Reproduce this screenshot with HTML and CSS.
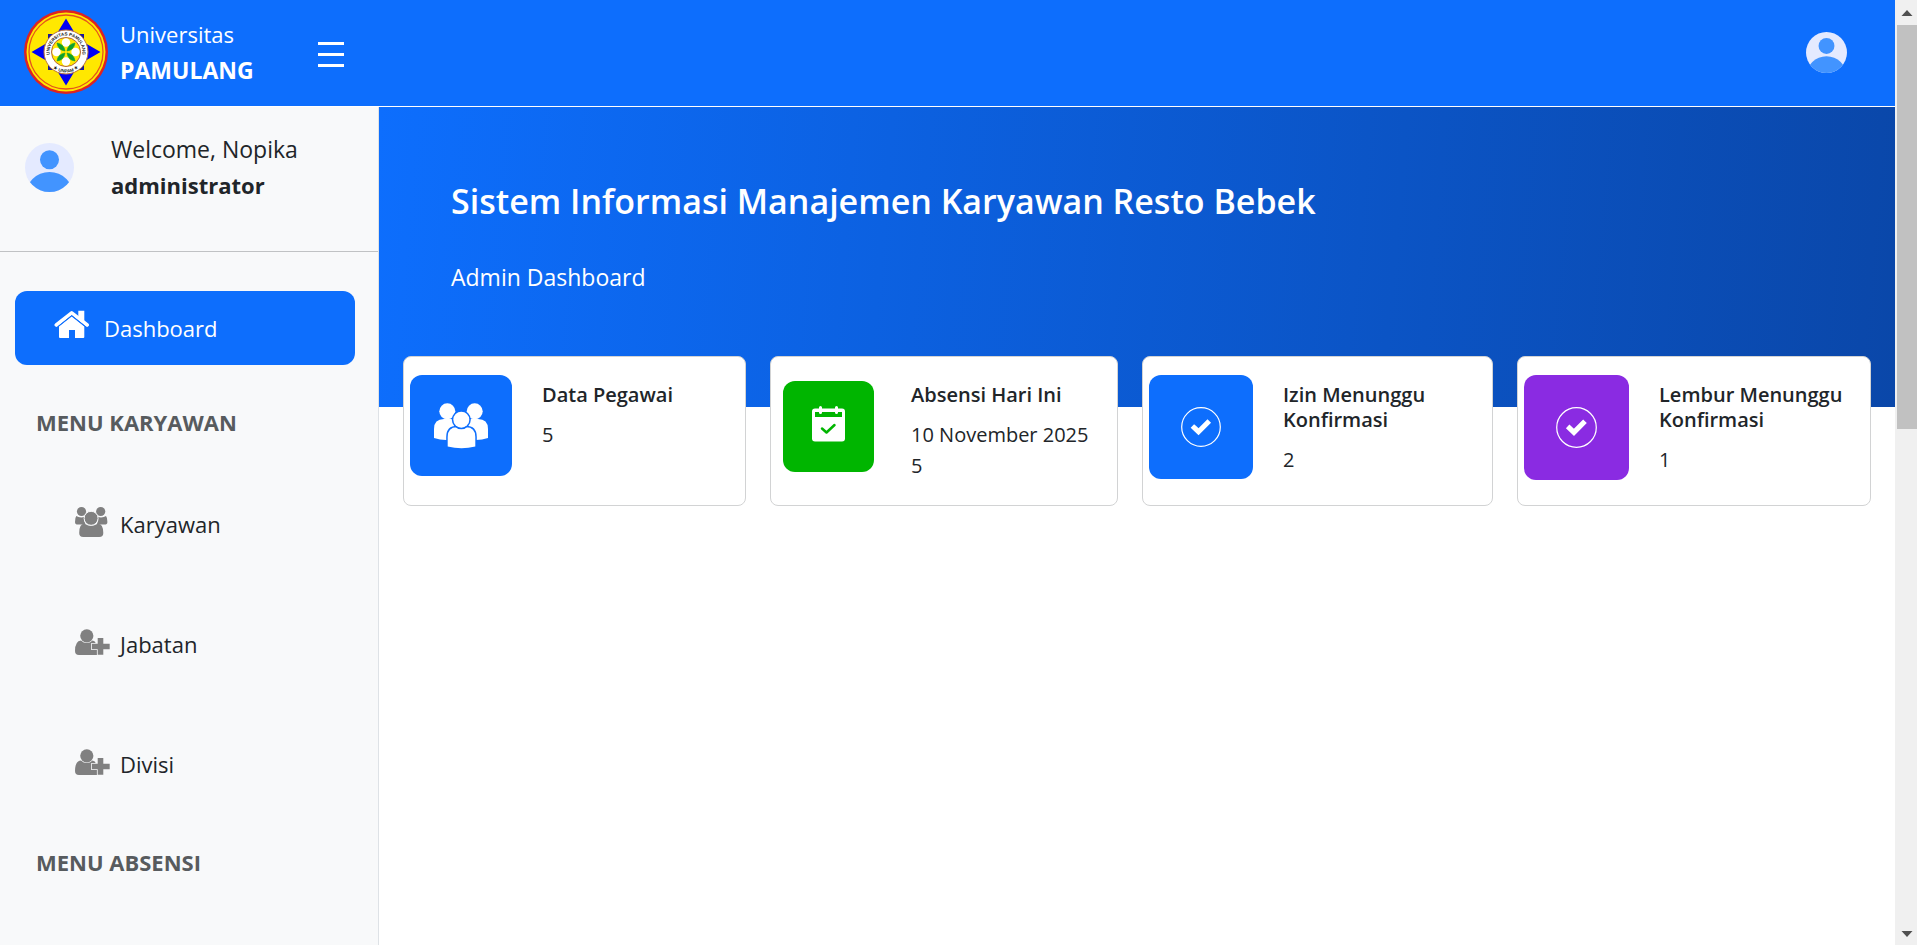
FILE: index.html
```html
<!DOCTYPE html>
<html lang="id">
<head>
<meta charset="utf-8">
<title>Admin Dashboard</title>
<link rel="stylesheet" href="styles.css">
</head>
<body>
<div class="page">
  <header class="navbar">
    <a class="brand" href="#">
      <svg class="brand-logo" viewBox="0 0 84 84" aria-hidden="true">
        <defs>
          <path id="ring-top" d="M28 50.500A16.400 16.400 0 1 1 56 50.500"/>
          <path id="ring-bottom" d="M27 56A20.500 20.500 0 0 0 57 56"/>
        </defs>
        <circle cx="42" cy="42" r="42" fill="#df2320"/>
        <circle cx="42" cy="42" r="39.500" fill="#ffe800"/>
        <circle cx="42" cy="42" r="37" fill="none" stroke="#e5531c" stroke-width="1.300"/>
        <path d="M24 24h36v36H24z" fill="#1a1a9c"/>
        <path d="M42 8.500L55 30H29zM42 75.500L29 54h26zM7.500 42L29 29.500v25zM76.500 42L55 54.500v-25z" fill="#0000f5"/>
        <circle cx="42" cy="42" r="22" fill="#fff" stroke="#c07a35" stroke-width="1"/>
        <circle cx="42" cy="42" r="14.500" fill="#ffe800" stroke="#b5653a" stroke-width="1"/>
        <g fill="#fff"><circle cx="42" cy="32.500" r="4.200"/><circle cx="42" cy="51.500" r="4.200"/><circle cx="32.500" cy="42" r="4.200"/><circle cx="51.500" cy="42" r="4.200"/></g>
        <path d="M41 41Q34 40 33 33Q40 34 41 41M43 41Q44 34 51 33Q50 40 43 41M41 43Q40 50 33 51Q34 44 41 43M43 43Q50 44 51 51Q44 50 43 43" fill="#0da030" stroke="#0da030" stroke-width=".6"/>
        <text class="ring-text"><textPath href="#ring-top" startOffset="50%" text-anchor="middle">UNIVERSITAS PAMULANG</textPath></text>
        <text class="ring-text"><textPath href="#ring-bottom" startOffset="50%" text-anchor="middle">★ UNPAM ★</textPath></text>
      </svg>
      <span class="brand-name">Universitas<strong>PAMULANG</strong></span>
    </a>
    <button class="menu-toggle" type="button" aria-label="Menu"><span></span><span></span><span></span></button>
    <button class="account" type="button" aria-label="Akun">
      <svg viewBox="0 0 50 50"><clipPath id="clip-a"><circle cx="25" cy="25" r="25"/></clipPath><circle cx="25" cy="25" r="25" fill="#e4eaff"/><g clip-path="url(#clip-a)" fill="#4294ff"><circle cx="25" cy="17" r="9.700"/><circle cx="25" cy="54" r="24.500"/></g></svg>
    </button>
  </header>
  <div class="layout">
    <aside class="sidebar">
      <div class="user">
        <svg class="user-avatar" viewBox="0 0 50 50" aria-hidden="true"><clipPath id="clip-b"><circle cx="25" cy="25" r="25"/></clipPath><circle cx="25" cy="25" r="25" fill="#e4eaff"/><g clip-path="url(#clip-b)" fill="#4294ff"><circle cx="25" cy="17" r="9.700"/><circle cx="25" cy="54" r="24.500"/></g></svg>
        <p class="user-text">Welcome, Nopika<strong>administrator</strong></p>
      </div>
      <nav>
        <a class="link-active" href="#">
          <svg class="nav-icon" viewBox="0 0 36 36" aria-hidden="true" fill="#fff"><path d="M24.300.700h6v13l-6-5z"/><path d="M2.300 15L17.700 2.800L33.200 15" fill="none" stroke="#fff" stroke-width="3.600" stroke-linecap="round" stroke-linejoin="round"/><path d="M5 16.500L17.700 6.400L30.300 16.500V27a1 1 0 0 1-1 1H21v-8h-6v8H6a1 1 0 0 1-1-1z"/><path d="M3.500 17L17.700 5.600L32 17" fill="none" stroke="#0d6efd" stroke-width="1"/></svg>
          Dashboard
        </a>
        <h2 class="menu-title">MENU KARYAWAN</h2>
        <ul class="menu">
          <li><a href="#">
            <svg class="nav-icon" viewBox="0 0 36 36" aria-hidden="true" fill="#808080"><circle cx="6.500" cy="5.500" r="4.600"/><circle cx="25.700" cy="5.500" r="4.600"/><path d="M1.300 10q2 1.400 5 1.400q1.700 0 3-.6q-.8 4.500 1.300 7.800H3Q0 18.600 0 16q0-4.500 1.300-6zM31 10q-2 1.400-5 1.400q-1.700 0-3-.6q.8 4.500-1.300 7.800h7.700q3 0 3-2.600Q32.400 11.500 31 10z"/><path d="M9.500 17.800q3 2 6.500 2t6.700-2Q28.300 17.800 28.300 27q0 4-4 4H8.200q-4 0-4-4Q4.200 17.800 9.500 17.800z"/><circle cx="16.100" cy="12.300" r="7" stroke="#f8f9fa" stroke-width="1"/></svg>
            Karyawan</a></li>
          <li><a href="#">
            <svg class="nav-icon" viewBox="0 0 36 36" aria-hidden="true" fill="#808080"><path d="M6 14.500q2.500 2.500 5.700 2.500t5.800-2.500Q22 15 22 24v5H4q-4 0-4-4Q0 15 6 14.500z"/><circle cx="11.800" cy="9.800" r="6.600"/><path d="M22.700 12h5.600v5.700h6.400v5.600h-6.400v5.400h-5.600v-5.400H17v-5.600h5.700z" stroke="#f8f9fa" stroke-width="1.600" paint-order="stroke"/></svg>
            Jabatan</a></li>
          <li><a href="#">
            <svg class="nav-icon" viewBox="0 0 36 36" aria-hidden="true" fill="#808080"><path d="M6 14.500q2.500 2.500 5.700 2.500t5.800-2.500Q22 15 22 24v5H4q-4 0-4-4Q0 15 6 14.500z"/><circle cx="11.800" cy="9.800" r="6.600"/><path d="M22.700 12h5.600v5.700h6.400v5.600h-6.400v5.400h-5.600v-5.400H17v-5.600h5.700z" stroke="#f8f9fa" stroke-width="1.600" paint-order="stroke"/></svg>
            Divisi</a></li>
        </ul>
        <h2 class="menu-title">MENU ABSENSI</h2>
      </nav>
    </aside>
    <main class="content">
      <section class="hero">
        <h1>Sistem Informasi Manajemen Karyawan Resto Bebek</h1>
        <p>Admin Dashboard</p>
      </section>
      <section class="cards">
        <article class="card">
          <div class="tile tile-blue tile-users">
            <svg width="54" height="46" viewBox="0 0 54 46" aria-hidden="true" fill="#fff"><circle cx="13.300" cy="8.300" r="8"/><circle cx="40.700" cy="8.300" r="8"/><path d="M0 35V26Q0 16 10 16h7q8 0 8 10v11H12Q6 37 0 35zM54 35V26Q54 16 44 16h-7q-8 0-8 10v11h13Q48 37 54 35z"/><path d="M13.700 43.500V34Q13.700 24.300 23 24.300h9Q41.300 24.300 41.300 34v9.500Q27.500 47 13.700 43.500z" stroke="#0d6efd" stroke-width="3" paint-order="stroke"/><circle cx="27.300" cy="16.700" r="8" stroke="#0d6efd" stroke-width="3" paint-order="stroke"/></svg>
          </div>
          <div class="card-text"><h3>Data Pegawai</h3><p>5</p></div>
        </article>
        <article class="card card-inset">
          <div class="tile tile-green">
            <svg width="33" height="38" viewBox="0 0 33 38" aria-hidden="true"><rect y="2.500" width="33" height="33" rx="3" fill="#fff"/><path d="M3 6h27v5H3z" fill="#00b500"/><path d="M8.500 1.500v5M24.500 1.500v5" stroke="#fff" stroke-width="3" stroke-linecap="round"/><path d="M10 22.500l4.500 4L22.500 19" fill="none" stroke="#00b500" stroke-width="2.500" stroke-linecap="round" stroke-linejoin="round"/></svg>
          </div>
          <div class="card-text"><h3>Absensi Hari Ini</h3><p>10 November 2025<br>5</p></div>
        </article>
        <article class="card">
          <div class="tile tile-blue">
            <svg width="40" height="40" viewBox="0 0 40 40" aria-hidden="true" fill="none" stroke="#fff"><circle cx="20" cy="20" r="19.300" stroke-width="1.200"/><path d="M13.200 20.700l4.300 4L26.500 15.700" stroke-width="5" stroke-linecap="square"/></svg>
          </div>
          <div class="card-text"><h3>Izin Menunggu Konfirmasi</h3><p>2</p></div>
        </article>
        <article class="card">
          <div class="tile tile-purple">
            <svg width="41" height="41" viewBox="0 0 40 40" aria-hidden="true" fill="none" stroke="#fff"><circle cx="20" cy="20" r="19.300" stroke-width="1.200"/><path d="M13.200 20.700l4.300 4L26.500 15.700" stroke-width="5" stroke-linecap="square"/></svg>
          </div>
          <div class="card-text"><h3>Lembur Menunggu Konfirmasi</h3><p>1</p></div>
        </article>
      </section>
    </main>
  </div>
</div>
<div class="scrollbar" aria-hidden="true">
  <svg viewBox="0 0 20 25"><path d="M10 10L15.500 16h-11z" fill="#505050"/></svg>
  <div class="scroll-thumb"></div>
  <svg viewBox="0 0 20 25"><path d="M10 17L15.500 11h-11z" fill="#505050"/></svg>
</div>
</body>
</html>
```
FILE: styles.css
```css
* { box-sizing: border-box; }

body {
  margin: 0;
  display: flex;
  height: 100vh;
  overflow: hidden;
  font-family: "Open Sans", "Noto Sans", sans-serif;
  font-size: 22px;
  line-height: 36px;
  color: #212529;
  background: #fff;
}

h1, h2, h3, p, ul { margin: 0; padding: 0; }
a { color: inherit; text-decoration: none; }
button { padding: 0; border: 0; background: none; cursor: pointer; }
svg { display: block; flex: none; }

.page { flex: 1; min-width: 0; display: flex; flex-direction: column; }

/* Top bar */
.navbar {
  flex: none;
  display: flex;
  align-items: center;
  height: 107px;
  padding: 0 48px 2px 24px;
  background: #0d6efd;
  border-bottom: 1px solid #fff;
}
.brand { display: flex; align-items: center; gap: 12px; width: 294px; color: #fff; }
.brand-logo { width: 84px; height: 84px; }
.brand-name strong, .user-text strong { display: block; }
.brand-name strong { font-size: 23px; }
.ring-text { font: bold 4.500px "Liberation Sans", sans-serif; fill: #222; }
.menu-toggle { display: flex; flex-direction: column; gap: 8px; width: 26px; padding-top: 4px; }
.menu-toggle span { height: 3px; background: #fff; }
.account { width: 41px; margin-left: auto; }

/* Sidebar */
.layout { flex: 1; min-height: 0; display: flex; }
.sidebar {
  flex: none;
  width: 379px;
  overflow: hidden;
  background: #f8f9fa;
  border-right: 1px solid #dee2e6;
}
.user {
  display: flex;
  align-items: center;
  gap: 37px;
  padding: 24px 25px 48px;
  border-bottom: 1px solid #c0c2c4;
}
.user-avatar { width: 49px; height: 49px; }
.user-text { font-size: 23px; }
.user-text strong { font-size: 22px; }
.link-active {
  display: flex;
  align-items: center;
  gap: 14px;
  height: 74px;
  margin: 39px 23px 39px 15px;
  padding-left: 39px;
  border-radius: 12px;
  color: #fff;
  background: #0d6efd;
}
.nav-icon { width: 36px; height: 36px; }
.menu-title { padding-left: 36px; font-size: 22px; font-weight: 700; line-height: 36px; color: #575b5e; }
.menu { margin: 24px 0 20px; list-style: none; }
.menu a { display: flex; align-items: center; gap: 9px; height: 120px; padding-left: 75px; }

/* Main column */
.content { flex: 1; min-width: 0; }
.hero {
  height: 300px;
  padding: 72px 72px 0;
  color: #fff;
  background: linear-gradient(95deg, #0d6efd, #0a47a9);
}
.hero h1 { margin-bottom: 36px; font-size: 34px; font-weight: 600; line-height: 44px; }
.hero p { font-size: 23px; }

.cards {
  display: grid;
  grid-template-columns: 343fr 348fr 351fr 354fr;
  gap: 24px;
  margin: -51px 24px 0;
}
.card {
  display: flex;
  align-items: flex-start;
  gap: 30px;
  min-height: 150px;
  padding: 18px 6px;
  background: #fff;
  border: 1px solid #d2d3d4;
  border-radius: 8px;
}
.card-inset { gap: 37px; padding-left: 12px; }
.tile {
  flex: none;
  display: flex;
  align-items: center;
  justify-content: center;
  width: 104px;
  height: 104px;
  border-radius: 12px;
}
.tile-users { width: 102px; height: 101px; }
.tile-blue { background: #0d6efd; }
.tile-green { width: 91px; height: 91px; margin-top: 6px; padding-bottom: 4px; background: #00b500; }
.tile-purple { width: 105px; height: 105px; background: #8a2be2; }
.card-text { padding-top: 7px; font-size: 20px; line-height: 31px; }
.card-text h3 { margin-bottom: 12px; font-size: 20px; font-weight: 600; line-height: 25px; }

/* Window scroll track */
.scrollbar { flex: none; display: flex; flex-direction: column; width: 22px; padding-left: 2px; background: #f0f0f0; }
.scroll-thumb { flex: none; height: 404px; margin-bottom: auto; background: #c1c1c1; }
```
